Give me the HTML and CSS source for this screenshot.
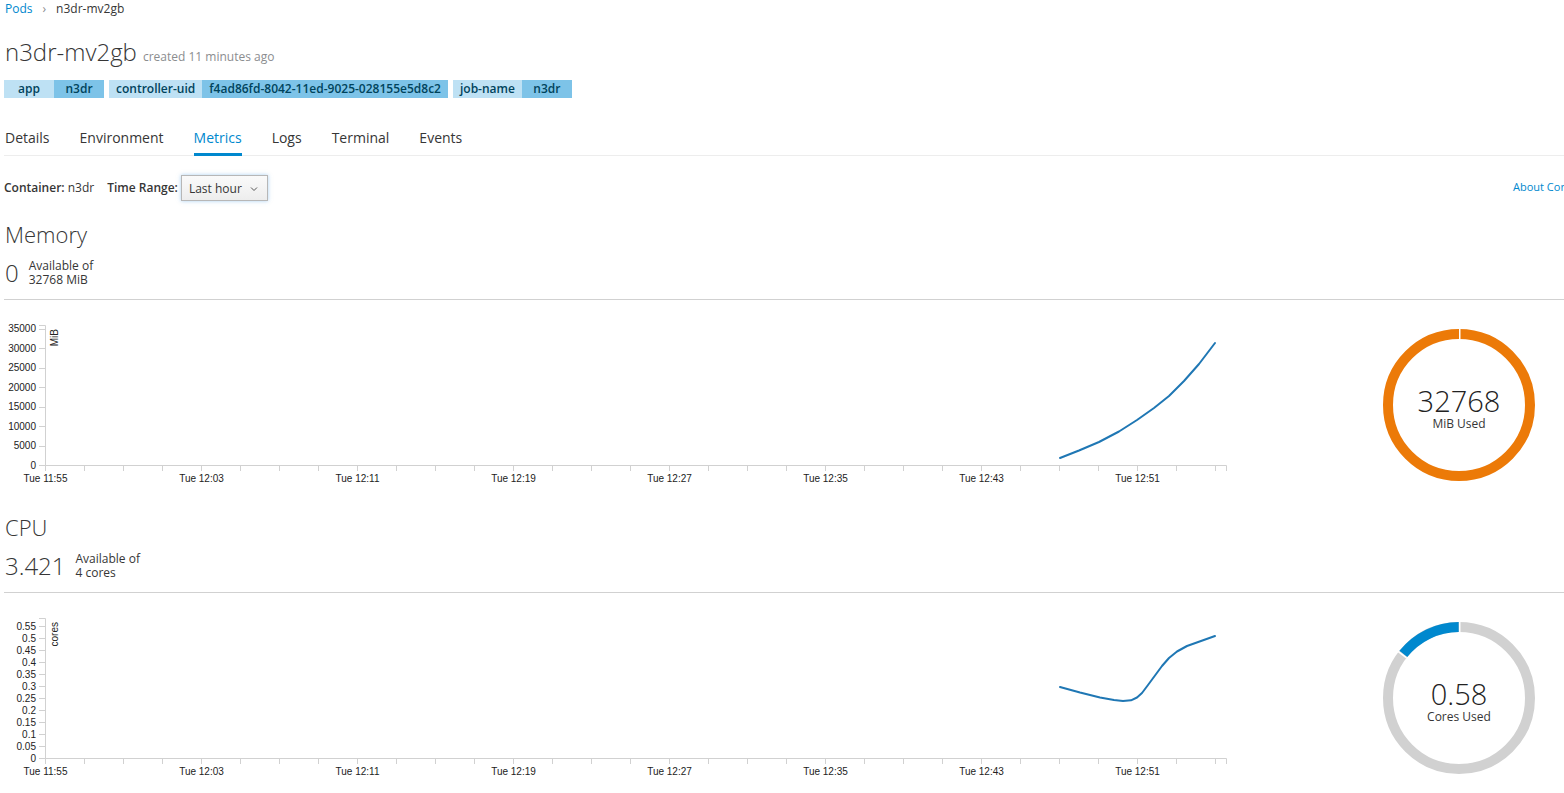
FILE: index.html
```html
<!DOCTYPE html>
<html>
<head>
<meta charset="utf-8">
<link rel="stylesheet" href="styles.css">
</head>
<body>
<div class="page">
  <div class="breadcrumb"><a class="crumb-link">Pods</a><span class="crumb-sep">›</span><span class="crumb-cur">n3dr-mv2gb</span></div>
  <div class="title-row"><h1 class="title">n3dr-mv2gb</h1><span class="created">created 11 minutes ago</span></div>
  <div class="labels">
    <div class="label"><span class="lk">app</span><span class="lv">n3dr</span></div>
    <div class="label"><span class="lk">controller-uid</span><span class="lv">f4ad86fd-8042-11ed-9025-028155e5d8c2</span></div>
    <div class="label"><span class="lk">job-name</span><span class="lv">n3dr</span></div>
  </div>
  <div class="tabs">
    <span class="tab">Details</span>
    <span class="tab">Environment</span>
    <span class="tab active">Metrics</span>
    <span class="tab">Logs</span>
    <span class="tab">Terminal</span>
    <span class="tab">Events</span>
  </div>
  <div class="toolbar">
    <span class="field"><b>Container:</b> n3dr</span>
    <span class="field"><b>Time Range:</b></span>
    <div class="select"><span>Last hour</span><svg class="chev" width="8" height="6" viewBox="0 0 8 6"><polyline points="1,1.5 4,4.5 7,1.5" fill="none" stroke="#555" stroke-width="1"/></svg></div>
    <a class="about">About Container Metrics</a>
  </div>

  <section class="metric">
    <h2 class="metric-title">Memory</h2>
    <div class="summary"><span class="big">0</span><span class="avail">Available of<br>32768 MiB</span></div>
    <hr class="rule">
    <div class="chart-row">
      <svg class="chart" width="1240" height="180" viewBox="0 0 1240 180" id="memchart"></svg>
      <svg class="donut" width="160" height="160" viewBox="0 0 160 160">
        <circle cx="80" cy="80" r="71" fill="none" stroke="#ec7a08" stroke-width="10"/>
        <rect x="80" y="2" width="1.5" height="12" fill="#fff"/>
        <text x="80" y="87" class="donut-num" text-anchor="middle">32768</text>
        <text x="80" y="103" class="donut-unit" text-anchor="middle">MiB Used</text>
      </svg>
    </div>
  </section>

  <section class="metric">
    <h2 class="metric-title">CPU</h2>
    <div class="summary"><span class="big">3.421</span><span class="avail">Available of<br>4 cores</span></div>
    <hr class="rule">
    <div class="chart-row">
      <svg class="chart" width="1240" height="180" viewBox="0 0 1240 180" id="cpuchart"></svg>
      <svg class="donut" width="160" height="160" viewBox="0 0 160 160">
        <circle cx="80" cy="80" r="71" fill="none" stroke="#d1d1d1" stroke-width="10"/>
        <circle cx="80" cy="80" r="71" fill="none" stroke="#0088ce" stroke-width="10" stroke-dasharray="63.5 400" transform="rotate(-141.6 80 80)"/>
        <rect x="80" y="2" width="1.5" height="12" fill="#fff"/>
        <rect x="79" y="2" width="1.5" height="12" fill="#fff" transform="rotate(-52.4 80 80)"/>
        <text x="80" y="87" class="donut-num" text-anchor="middle">0.58</text>
        <text x="80" y="103" class="donut-unit" text-anchor="middle">Cores Used</text>
      </svg>
    </div>
  </section>
</div>
<script src="chart.js"></script>
</body>
</html>
```

FILE: chart.js
```js
(function () {
  var NS = 'http://www.w3.org/2000/svg';
  var times = ['Tue 11:55', 'Tue 12:03', 'Tue 12:11', 'Tue 12:19', 'Tue 12:27', 'Tue 12:35', 'Tue 12:43', 'Tue 12:51'];
  function el(name, attrs, text) {
    var e = document.createElementNS(NS, name);
    for (var k in attrs) e.setAttribute(k, attrs[k]);
    if (text !== undefined) e.textContent = text;
    return e;
  }
  function build(svg, ticks, unit, line) {
    var axis = el('g', { 'class': 'axis' });
    axis.appendChild(el('path', { d: 'M35,15.5H41.5V155.5H35', fill: 'none', stroke: '#d1d1d1' }));
    ticks.forEach(function (t) {
      var y = Math.round(t.y) + 0.5;
      axis.appendChild(el('line', { x1: 35, x2: 41, y1: y, y2: y, stroke: '#d1d1d1' }));
      axis.appendChild(el('text', { x: 32, y: t.y + 3.5, 'text-anchor': 'end', 'class': 'tick' }, t.label));
    });
    axis.appendChild(el('path', { d: 'M41.5,161V155.5H1222.5V161', fill: 'none', stroke: '#d1d1d1' }));
    for (var k = 0; k <= 30; k++) {
      var x = 41.5 + 39 * k;
      axis.appendChild(el('line', { x1: x, x2: x, y1: 155.5, y2: 161, stroke: '#d1d1d1' }));
      if (k % 4 === 0) axis.appendChild(el('text', { x: x, y: 171.5, 'text-anchor': 'middle', 'class': 'tick' }, times[k / 4]));
    }
    axis.appendChild(el('text', { transform: 'translate(54,19) rotate(-90)', 'text-anchor': 'end', 'class': 'tick' }, unit));
    svg.appendChild(axis);
    svg.appendChild(el('polyline', { points: line, fill: 'none', stroke: '#1f77b4', 'stroke-width': 2, 'stroke-linejoin': 'round', 'stroke-linecap': 'round' }));
  }
  var memTicks = [];
  for (var v = 0; v <= 35000; v += 5000) memTicks.push({ y: 155 - v * 140 / 36000, label: String(v) });
  var cpuTicks = [];
  var cl = ['0', '0.05', '0.1', '0.15', '0.2', '0.25', '0.3', '0.35', '0.4', '0.45', '0.5', '0.55'];
  for (var i = 0; i < cl.length; i++) cpuTicks.push({ y: 155 - i * 0.05 * 240, label: cl[i] });
  build(document.getElementById('memchart'), memTicks, 'MiB',
    '1056,148 1075,140.5 1095,132 1115,121.5 1133,110 1150,98 1165,86 1180,71 1195,54 1211,33');
  build(document.getElementById('cpuchart'), cpuTicks, 'cores',
    '1056,84 1076,89.5 1096,94.5 1110,97 1119,98 1127,97.3 1133,94.5 1138,90 1144,82 1151,72.5 1158,63 1165,55 1173,48.5 1183,43 1197,38 1211,33');
})();
```

FILE: styles.css
```css
html { overflow-x: hidden; }
body {
  margin: 0;
  font-family: "Open Sans", "Liberation Sans", sans-serif;
  color: #363636;
  background: #fff;
}
.page {
  width: 1642px;
  box-sizing: border-box;
  padding: 0 4px;
}
.breadcrumb {
  height: 18px;
  line-height: 18px;
  font-size: 12px;
  padding-left: 1px;
  display: flex;
}
.crumb-link { color: #0088ce; }
.crumb-sep { color: #8b8d8f; margin: 0 10px 0 10px; }
.crumb-cur { color: #363636; }
.title-row {
  display: flex;
  align-items: baseline;
  margin-top: 19px;
  height: 30px;
}
.title {
  margin: 0;
  font-size: 24px;
  font-weight: 300;
  line-height: 30px;
  padding-left: 1px;
}
.created {
  font-size: 12px;
  color: #8b8d8f;
  margin-left: 6px;
}
.labels {
  display: flex;
  gap: 5px;
  margin-top: 13px;
}
.label { display: flex; }
.lk, .lv {
  height: 18px;
  line-height: 18px;
  font-size: 12px;
  font-weight: 600;
  color: #00435c;
  padding: 0 7px;
  min-width: 50px;
  box-sizing: border-box;
  text-align: center;
}
.lk { background: #bee1f4; }
.lv { background: #7dc3e8; }
.tabs {
  display: flex;
  gap: 30px;
  margin-top: 30px;
  border-bottom: 1px solid #ededed;
  padding-left: 1px;
}
.tab {
  font-size: 14px;
  line-height: 20px;
  padding-bottom: 5px;
  margin-bottom: -1px;
  border-bottom: 3px solid transparent;
}
.tab.active {
  color: #0088ce;
  border-bottom-color: #0088ce;
}
.toolbar {
  display: flex;
  align-items: center;
  margin-top: 19px;
  font-size: 12px;
  height: 26px;
}
.field { margin-right: 13px; margin-top: -1px; }
.field b { font-weight: 600; }
.toolbar .field:nth-child(2) { margin-right: 3px; }
.select {
  width: 87px;
  height: 26px;
  box-sizing: border-box;
  border: 1px solid #b7b7b7;
  background: linear-gradient(#fafafa, #ededed);
  box-shadow: 0 0 4px rgba(100, 170, 230, 0.55);
  display: flex;
  align-items: center;
  padding: 0 9px 0 7px;
  justify-content: space-between;
}
.chev { margin-top: 1px; }
.about {
  margin-left: auto;
  color: #0088ce;
  font-size: 11px;
  margin-top: -4px;
}
.metric { margin-top: 18px; }
.metric + .metric { margin-top: 22px; }
.metric-title {
  margin: 0;
  font-size: 22px;
  font-weight: 300;
  line-height: 30px;
  padding-left: 1px;
}
.summary {
  display: flex;
  align-items: center;
  margin-top: 9px;
  height: 30px;
}
.big {
  font-size: 24px;
  font-weight: 300;
  line-height: 30px;
  margin-right: 10px;
  padding-left: 1px;
}
.avail {
  font-size: 12px;
  line-height: 14px;
}
.rule {
  margin: 11px 0 0 0;
  border: 0;
  border-top: 1px solid #d1d1d1;
  height: 0;
}
.chart-row {
  display: flex;
  align-items: flex-start;
  margin-top: 10px;
  height: 180px;
}
.chart { display: block; }
.donut {
  display: block;
  margin-left: 135px;
  margin-top: 15px;
}
.tick {
  font-family: "Liberation Sans", Arial, sans-serif;
  font-size: 10px;
  fill: #222;
}
.donut-num {
  font-family: "Open Sans", sans-serif;
  font-size: 29px;
  font-weight: 300;
  fill: #222;
}
.donut-unit {
  font-family: "Open Sans", sans-serif;
  font-size: 12px;
  fill: #363636;
}
```
